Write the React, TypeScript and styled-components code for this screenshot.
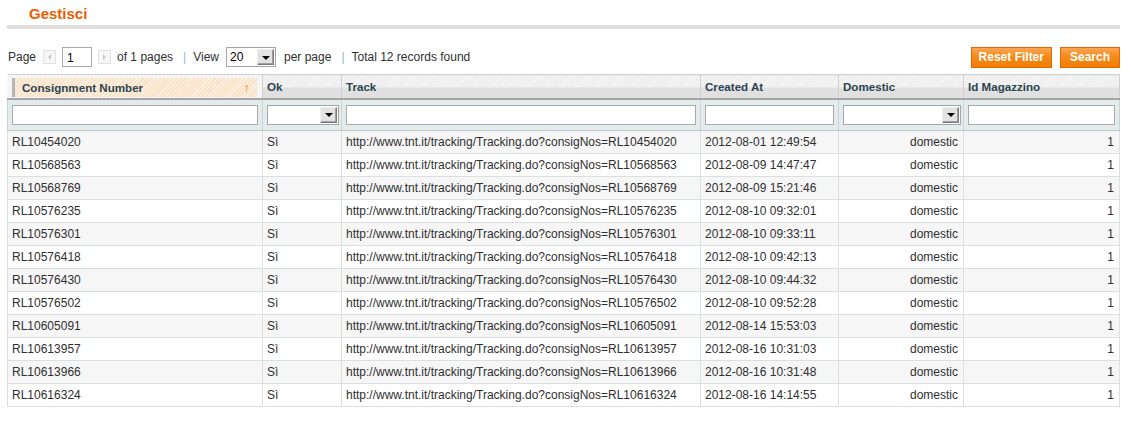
import styled, { createGlobalStyle } from "styled-components";

const GlobalStyle = createGlobalStyle`
  body {
    margin: 0;
    background: #fff;
    font-family: "Liberation Sans", Arial, sans-serif;
    font-size: 12px;
    color: #2f2f2f;
  }
`;

interface Shipment {
  number: string;
  createdAt: string;
}

const shipments: Shipment[] = [
  { number: "RL10454020", createdAt: "2012-08-01 12:49:54" },
  { number: "RL10568563", createdAt: "2012-08-09 14:47:47" },
  { number: "RL10568769", createdAt: "2012-08-09 15:21:46" },
  { number: "RL10576235", createdAt: "2012-08-10 09:32:01" },
  { number: "RL10576301", createdAt: "2012-08-10 09:33:11" },
  { number: "RL10576418", createdAt: "2012-08-10 09:42:13" },
  { number: "RL10576430", createdAt: "2012-08-10 09:44:32" },
  { number: "RL10576502", createdAt: "2012-08-10 09:52:28" },
  { number: "RL10605091", createdAt: "2012-08-14 15:53:03" },
  { number: "RL10613957", createdAt: "2012-08-16 10:31:03" },
  { number: "RL10613966", createdAt: "2012-08-16 10:31:48" },
  { number: "RL10616324", createdAt: "2012-08-16 14:14:55" },
];

const columns = [
  { label: "Consignment Number", width: 255 },
  { label: "Ok", width: 79 },
  { label: "Track", width: 359 },
  { label: "Created At", width: 138 },
  { label: "Domestic", width: 125 },
  { label: "Id Magazzino", width: 156 },
];

export default function App() {
  return (
    <Page>
      <GlobalStyle />
      <ContentHeader>
        <Title>Gestisci</Title>
      </ContentHeader>

      <Toolbar>
        <Pager>
          <span>Page</span>
          <ArrowBtn>
            <ArrowLeft />
          </ArrowBtn>
          <PageInput>1</PageInput>
          <ArrowBtn>
            <ArrowRight />
          </ArrowBtn>
          <span>of 1 pages</span>
          <Sep>|</Sep>
          <span>View</span>
          <FakeSelect $width={48}>
            <SelectValue>20</SelectValue>
            <DropBtn>
              <DownTri />
            </DropBtn>
          </FakeSelect>
          <span>per page</span>
          <Sep>|</Sep>
          <span>Total 12 records found</span>
        </Pager>
        <Actions>
          <OrangeButton $pad={7}>Reset Filter</OrangeButton>
          <OrangeButton $pad={9}>Search</OrangeButton>
        </Actions>
      </Toolbar>

      <Grid>
        <colgroup>
          {columns.map((c) => (
            <col key={c.label} style={{ width: c.width }} />
          ))}
        </colgroup>
        <thead>
          <HeadRow>
            {columns.map((c, i) =>
              i === 0 ? (
                <SortedTh key={c.label}>
                  <SortLink>
                    <span>{c.label}</span>
                    <SortArrow>↑</SortArrow>
                  </SortLink>
                </SortedTh>
              ) : (
                <Th key={c.label}>{c.label}</Th>
              )
            )}
          </HeadRow>
          <FilterRow>
            <FilterTh>
              <TextFilter />
            </FilterTh>
            <FilterTh>
              <FakeSelect $width={70}>
                <SelectValue />
                <DropBtn>
                  <DownTri />
                </DropBtn>
              </FakeSelect>
            </FilterTh>
            <FilterTh>
              <TextFilter />
            </FilterTh>
            <FilterTh>
              <TextFilter />
            </FilterTh>
            <FilterTh>
              <FakeSelect $width={116}>
                <SelectValue />
                <DropBtn>
                  <DownTri />
                </DropBtn>
              </FakeSelect>
            </FilterTh>
            <FilterTh>
              <TextFilter />
            </FilterTh>
          </FilterRow>
        </thead>
        <tbody>
          {shipments.map((s, i) => (
            <Row key={s.number} $even={i % 2 === 0}>
              <Td>{s.number}</Td>
              <Td>Sì</Td>
              <Td>
                http://www.tnt.it/tracking/Tracking.do?consigNos={s.number}
              </Td>
              <Td>{s.createdAt}</Td>
              <Td $right>domestic</Td>
              <Td $right>1</Td>
            </Row>
          ))}
        </tbody>
      </Grid>
    </Page>
  );
}

const Page = styled.div`
  padding: 0 11px 0 7px;
`;

const ContentHeader = styled.div`
  border-bottom: 4px solid #dfdfdf;
  padding: 5px 0 3px 22px;
  height: 17px;
`;

const Title = styled.h3`
  margin: 0;
  font-size: 15px;
  line-height: 17px;
  font-weight: bold;
  color: #eb5e00;
`;

const Toolbar = styled.div`
  display: flex;
  align-items: center;
  justify-content: space-between;
  margin-top: 18px;
  height: 20px;
  margin-bottom: 7px;
`;

const Pager = styled.div`
  display: flex;
  align-items: center;
  color: #2f2f2f;
  padding-left: 1px;

  & > span {
    margin-right: 7px;
  }
`;

const Sep = styled.span`
  color: #8fb8d4;
  margin: 0 8px 0 3px;
`;

const ArrowBtn = styled.div`
  width: 11px;
  height: 12px;
  border: 1px solid #e2e2e2;
  background: #f6f6f6;
  display: flex;
  align-items: center;
  justify-content: center;
  margin-right: 6px;
`;

const ArrowLeft = styled.span`
  width: 0;
  height: 0;
  border-top: 3px solid transparent;
  border-bottom: 3px solid transparent;
  border-right: 3px solid #c9c9c9;
`;

const ArrowRight = styled.span`
  width: 0;
  height: 0;
  border-top: 3px solid transparent;
  border-bottom: 3px solid transparent;
  border-left: 3px solid #c9c9c9;
`;

const PageInput = styled.div`
  width: 24px;
  height: 18px;
  border: 1px solid #aaa;
  background: #fff;
  padding-left: 4px;
  line-height: 20px;
  font-size: 12px;
  margin-right: 6px;
  color: #000;
`;

const FakeSelect = styled.div<{ $width: number }>`
  width: ${({ $width }) => $width}px;
  height: 18px;
  border: 1px solid #a5a5a5;
  background: #fff;
  display: flex;
  align-items: stretch;
  margin-right: 8px;
  color: #000;
`;

const SelectValue = styled.div`
  flex: 1;
  padding-left: 3px;
  line-height: 18px;
  font-size: 12px;
`;

const DropBtn = styled.div`
  width: 15px;
  border: 1px solid #7b7b7b;
  border-top-color: #eee;
  border-left-color: #eee;
  background: #e2e2e2;
  margin: 1px;
  display: flex;
  align-items: center;
  justify-content: center;
  box-shadow: inset -1px -1px 0 #a0a0a0;
`;

const DownTri = styled.span`
  width: 0;
  height: 0;
  border-left: 4px solid transparent;
  border-right: 4px solid transparent;
  border-top: 4px solid #000;
  margin-top: 1px;
`;

const Actions = styled.div`
  display: flex;
  gap: 8px;
`;

const OrangeButton = styled.button<{ $pad: number }>`
  font-family: "Liberation Sans", Arial, sans-serif;
  font-size: 12px;
  font-weight: bold;
  color: #fff;
  height: 21px;
  padding: 0 ${({ $pad }) => $pad}px;
  border: 1px solid #ed6502;
  background: linear-gradient(to bottom, #f9a653 0%, #f48a1a 45%, #f07f06 100%);
  cursor: pointer;
  line-height: 18px;
`;

const Grid = styled.table`
  width: 100%;
  table-layout: fixed;
  border-collapse: collapse;
  border: 1px solid #cbd3d4;
`;

const HeadRow = styled.tr`
  height: 24px;
`;

const Th = styled.th`
  text-align: left;
  font-size: 11.6px;
  font-weight: bold;
  color: #2d444f;
  padding: 1px 4px 0;
  border-left: 1px solid #f9f9f9;
  border-right: 1px solid #d1cfcf;
  border-bottom: 2px solid #a6a6a6;
  background:
    linear-gradient(to bottom, transparent 0, transparent 52%, #e0e0e0 52%),
    repeating-linear-gradient(135deg, #ededed 0 2px, #f8f8f8 2px 3px);
`;

const SortedTh = styled(Th)`
  padding: 3px 5px 0 4px;
  background: #f5f5f5;
`;

const SortLink = styled.div`
  display: flex;
  align-items: center;
  justify-content: space-between;
  height: 19px;
  padding: 0 7px 0 7px;
  border-left: 3px solid #b5b5b5;
  background: repeating-linear-gradient(135deg, #fbe3c9 0 2px, #fdf2e6 2px 3px);
`;

const SortArrow = styled.span`
  color: #f07400;
  font-size: 13px;
  font-weight: normal;
`;

const FilterRow = styled.tr`
  height: 32px;
`;

const FilterTh = styled.th`
  padding: 0 4px;
  background: #e3ebed;
  border-right: 1px solid #cdd4d5;
  border-bottom: 1px solid #bfc7c9;
  text-align: left;
  vertical-align: middle;

  & > div {
    margin-right: 0;
  }
`;

const TextFilter = styled.div`
  height: 18px;
  border: 1px solid #aaa;
  background: #fff;
`;

const Row = styled.tr<{ $even: boolean }>`
  height: 23px;
  background: ${({ $even }) => ($even ? "#f6f6f6" : "#ffffff")};
`;

const Td = styled.td<{ $right?: boolean }>`
  padding: 0 5px 0 4px;
  border: 1px solid #dadfe0;
  text-align: ${({ $right }) => ($right ? "right" : "left")};
  color: #2f2f2f;
  font-size: 12px;
  white-space: nowrap;
  overflow: hidden;
`;
